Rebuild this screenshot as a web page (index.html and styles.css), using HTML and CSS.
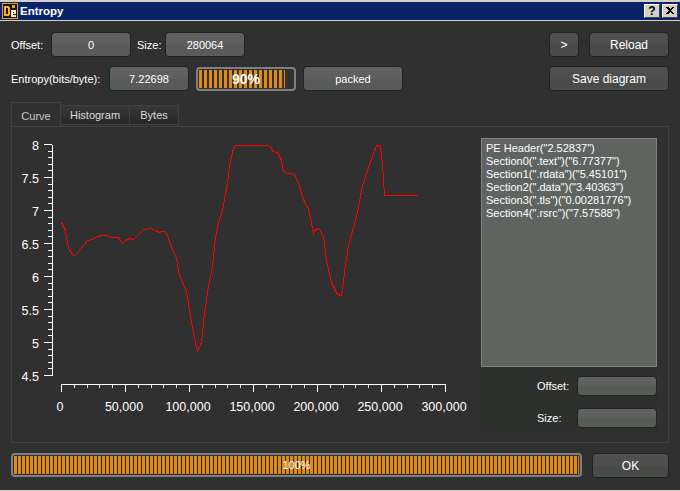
FILE: index.html
```html
<!DOCTYPE html>
<html lang="en">
<head>
    <meta charset="UTF-8">
    <meta name="viewport" content="width=device-width, initial-scale=1.0">
    <title>Entropy</title>
    <link rel="stylesheet" href="styles.css">
</head>
<body>
    <div class="window">
        <div class="titlebar">
            <svg class="app-icon" width="16" height="16" viewBox="0 0 16 16" shape-rendering="crispEdges">
                <rect width="16" height="16" fill="#e8a020"/>
                <rect x="1" y="1" width="14" height="14" fill="#1a1408"/>
                <path d="M2 3h4l2 2v6l-2 2H2z M4 5v6h1l1-1V6L5 5z" fill="#f0b030" fill-rule="evenodd"/>
                <path d="M9 7h5v4h-3v1h3v2H9z M11 8.500v1h1v-1z" fill="#f6e8c0" fill-rule="evenodd"/>
                <rect x="10" y="2" width="3" height="3" fill="#e8a020"/>
            </svg>
            <span class="title-text">Entropy</span>
            <div class="title-btn">?</div>
            <div class="title-btn close-btn">
                <svg width="8" height="7" viewBox="0 0 8 7" shape-rendering="crispEdges">
                    <path d="M0 0h2l2 2 2-2h2v1L5 3.500 8 6v1H6L4 5 2 7H0V6l3-2.500L0 1z" fill="#000"/>
                </svg>
            </div>
        </div>

        <div class="content">
            <div class="row">
                <div class="row-left">
                    <span class="label">Offset:</span>
                    <div class="field">0</div>
                    <span class="label size-label">Size:</span>
                    <div class="field">280064</div>
                </div>
                <div class="row-right">
                    <div class="btn btn-small">&gt;</div>
                    <div class="btn">Reload</div>
                </div>
            </div>

            <div class="row row-second">
                <div class="row-left">
                    <span class="label entropy-label">Entropy(bits/byte):</span>
                    <div class="field">7.22698</div>
                    <div class="progress progress-small"><div class="progress-fill"></div><span class="progress-text bold">90%</span></div>
                    <div class="field field-wide">packed</div>
                </div>
                <div class="row-right">
                    <div class="btn btn-wide">Save diagram</div>
                </div>
            </div>

            <div class="tabs">
                <div class="tab active">Curve</div>
                <div class="tab tab-histogram">Histogram</div>
                <div class="tab tab-bytes">Bytes</div>
            </div>

            <div class="pane">
                <svg class="chart" width="469" height="315" viewBox="12 127 469 315">
                    <g id="axes" shape-rendering="crispEdges" stroke="#fff" stroke-width="1" fill="none"></g>
                    <g id="labels" class="chart-labels"></g>
                    <polyline id="curve" fill="none" stroke="#ff0000" stroke-width="1" shape-rendering="crispEdges" transform="translate(0.5 0.5)"></polyline>
                </svg>

                <div class="side">
                    <div class="section-list">
                        <div>PE Header("2.52837")</div>
                        <div>Section0(".text")("6.77377")</div>
                        <div>Section1(".rdata")("5.45101")</div>
                        <div>Section2(".data")("3.40363")</div>
                        <div>Section3(".tls")("0.00281776")</div>
                        <div>Section4(".rsrc")("7.57588")</div>
                    </div>
                    <div class="side-row">
                        <span class="label">Offset:</span>
                        <div class="field field-short"></div>
                    </div>
                    <div class="side-row">
                        <span class="label">Size:</span>
                        <div class="field field-short"></div>
                    </div>
                </div>
            </div>

            <div class="bottom">
                <div class="progress progress-full"><div class="progress-fill"></div><span class="progress-text">100%</span></div>
                <div class="btn btn-ok">OK</div>
            </div>
        </div>
    </div>

    <script>
        const points = [
            [61,222],[65,230],[68,248],[73,255],[76,254],[80,248],[84,244],[87,240],[92,239],[97,236],
            [101,235],[106,235],[111,237],[118,237],[122,243],[125,240],[129,238],[133,239],[138,234],[143,229],
            [150,228],[155,230],[159,232],[161,231],[165,231],[168,238],[173,252],[176,257],[179,275],[182,282],
            [186,291],[188,303],[191,322],[194,337],[197,351],[201,342],[204,313],[208,285],[212,267],[215,237],
            [218,222],[222,210],[227,183],[229,165],[233,148],[235,145],[268,145],[271,147],[272,151],[277,152],
            [281,160],[283,171],[288,173],[294,174],[298,183],[302,196],[305,204],[308,208],[313,233],[314,230],
            [318,228],[320,230],[323,237],[326,260],[331,282],[337,294],[341,295],[342,290],[344,272],[348,245],
            [353,227],[357,212],[362,185],[368,167],[373,153],[376,145],[380,145],[382,165],[384,195],[417,195]
        ];
        document.getElementById("curve").setAttribute("points", points.map(p => p.join(",")).join(" "));

        const axes = document.getElementById("axes");
        const labels = document.getElementById("labels");
        let d = "M52.500 144.500V375.500";
        for (let i = 0; i <= 35; i++) {
            const y = Math.round(144 + i * 6.6) + 0.5;
            d += ` M${i % 5 === 0 ? 44 : 48} ${y}H52`;
        }
        d += " M61.500 384.500H445.500";
        for (let i = 0; i <= 30; i++) {
            const x = Math.round(61 + i * 12.8) + 0.5;
            d += ` M${x} 384V${i % 5 === 0 ? 392 : 388}`;
        }
        axes.innerHTML = `<path d="${d}"/>`;

        function addLabel(x, y, text, anchor) {
            const t = document.createElementNS("http://www.w3.org/2000/svg", "text");
            t.setAttribute("x", x);
            t.setAttribute("y", y);
            t.setAttribute("text-anchor", anchor);
            t.textContent = text;
            labels.appendChild(t);
        }
        ["8", "7.5", "7", "6.5", "6", "5.5", "5", "4.5"].forEach((v, i) => addLabel(39, 150 + i * 33, v, "end"));
        ["0", "50,000", "100,000", "150,000", "200,000", "250,000", "300,000"].forEach((v, i) => addLabel(60 + i * 64, 411, v, "middle"));
    </script>
</body>
</html>
```

FILE: styles.css
```css
* {
    box-sizing: border-box;
}
html, body {
    margin: 0;
    padding: 0;
}
body {
    font-family: "Liberation Sans", Arial, sans-serif;
    font-size: 11px;
    color: #fff;
    background-color: #303030;
}
.window {
    width: 680px;
    height: 491px;
    background-color: #303030;
    border-top: 2px solid #d4d0c8;
    border-bottom: 1px solid #d4d0c8;
    overflow: hidden;
}
.titlebar {
    display: flex;
    align-items: center;
    height: 19px;
    padding: 0 2px 1px 2px;
    background-color: #0a246a;
    border-bottom: 1px solid #d4d0c8;
}
.app-icon {
    margin-right: 2px;
}
.title-text {
    flex: 1;
    font-weight: bold;
    font-size: 11.500px;
}
.title-btn {
    display: flex;
    align-items: center;
    justify-content: center;
    width: 16px;
    height: 14px;
    margin-left: 2px;
    color: #000;
    font-weight: bold;
    font-size: 12px;
    background-color: #d4d0c8;
    border: 1px solid;
    border-color: #fff #404040 #404040 #fff;
}
.content {
    padding: 11px 11px 0 11px;
}
.row {
    display: flex;
    justify-content: space-between;
    height: 25px;
}
.row-second {
    margin-top: 9px;
}
.row-left, .row-right {
    display: flex;
    align-items: center;
}
.label {
    white-space: nowrap;
}
.field, .btn {
    display: flex;
    align-items: center;
    justify-content: center;
    width: 80px;
    height: 25px;
    border: 1px solid #1c261c;
    border-radius: 4px;
}
.field {
    background: linear-gradient(#626262 0%, #5e5e5e 50%, #585a58 55%, #5a5c5a 100%);
}
.btn {
    font-size: 12px;
    background: linear-gradient(#505050 0%, #4e4e4e 50%, #484a48 55%, #4a4c4a 100%);
}
.row-left > .label:first-child {
    width: 40px;
}
.size-label {
    margin-left: 6px;
    width: 28px;
}
.row-left > .label.entropy-label {
    width: 98px;
}
.field-wide {
    width: 100px;
    margin-left: 7px;
}
.btn-small {
    width: 30px;
    margin-right: 10px;
}
.btn-wide {
    width: 120px;
}
.progress {
    position: relative;
    height: 24px;
    border: 2px solid #808080;
    border-radius: 4px;
    padding: 1px;
}
.progress-small {
    width: 100px;
    margin-left: 7px;
}
.progress-full {
    flex: 1;
}
.progress-fill {
    height: 100%;
    background: repeating-linear-gradient(90deg, #e08a1a 0, #e08a1a 3px, #242424 3px, #242424 4px);
}
.progress-small .progress-fill {
    width: 86px;
    background: repeating-linear-gradient(90deg, #e08a1a 0, #e08a1a 3px, #303030 3px, #303030 5px);
}
.progress-text {
    position: absolute;
    left: 0;
    right: 0;
    top: 4px;
    text-align: center;
}
.bold {
    font-weight: bold;
    font-size: 14px;
    top: 2px;
}
.tabs {
    display: flex;
    height: 24px;
    margin-top: 11px;
}
.tab {
    display: flex;
    align-items: center;
    justify-content: center;
    width: 50px;
    height: 20px;
    margin-top: 3px;
    color: #d8d8d8;
    background: linear-gradient(#383838, #262826);
    border: 1px solid #404040;
    border-left: none;
}
.tab.active {
    height: 24px;
    margin-top: 0;
    padding-top: 2px;
    color: #c8c8c8;
    background: #303030;
    border-left: 1px solid #404040;
    border-bottom: none;
}
.tab-histogram {
    width: 69px;
}
.tab-bytes {
    width: 49px;
}
.pane {
    display: flex;
    height: 317px;
    border: 1px solid #404040;
}
.chart {
    flex: none;
}
.chart-labels text {
    fill: #fff;
    font-family: "Liberation Sans", Arial, sans-serif;
    font-size: 12.500px;
}
.side {
    width: 176px;
    height: 294px;
    margin-top: 11px;
    background-color: #2e302e;
}
.section-list {
    width: 176px;
    height: 229px;
    padding: 3px 4px;
    line-height: 13px;
    white-space: nowrap;
    background-color: #606460;
    border: 1px solid #808480;
}
.side-row {
    display: flex;
    align-items: center;
    justify-content: space-between;
    width: 176px;
    height: 20px;
    margin-top: 12px;
    padding-left: 56px;
}
.section-list + .side-row {
    margin-top: 9px;
}
.field-short {
    height: 20px;
}
.side-row .label {
    width: 40px;
}
.bottom {
    display: flex;
    justify-content: space-between;
    margin-top: 10px;
}
.btn-ok {
    width: 77px;
    margin-left: 10px;
}
```
